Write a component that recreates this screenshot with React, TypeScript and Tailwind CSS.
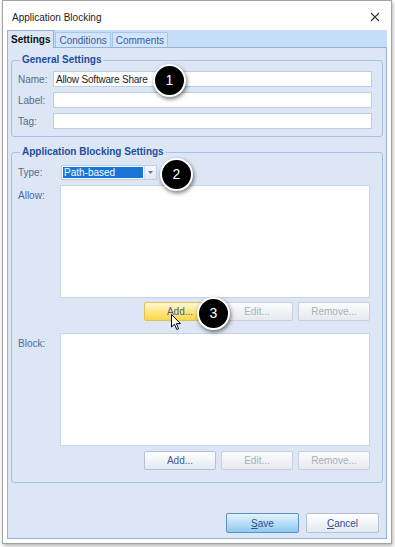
import React from 'react';

const btnBase =
  'h-[19px] w-[72px] rounded-[2px] border flex items-center justify-center text-[10px]';

function Btn({ label, kind }: { label: string; kind: 'normal' | 'disabled' | 'hover' }) {
  const cls =
    kind === 'hover'
      ? 'border-[#e2bf57] bg-gradient-to-b from-[#fff9d6] via-[#ffe680] to-[#ffd54a] text-[#3d5b97]'
      : kind === 'disabled'
      ? 'border-[#c9d0db] bg-gradient-to-b from-[#fbfcfd] to-[#e6e9ee] text-[#a9b0bb]'
      : 'border-[#b3c1d7] bg-gradient-to-b from-[#ffffff] to-[#e2e9f3] text-[#3d5b97]';
  return <div className={`${btnBase} ${cls}`}>{label}</div>;
}

function Badge({ n, x, y }: { n: number; x: number; y: number }) {
  return (
    <div
      className="absolute w-[33px] h-[33px] rounded-full bg-black border-2 border-white shadow-[1px_2px_4px_rgba(0,0,0,0.55)] flex items-center justify-center text-white text-[14px]"
      style={{ left: x - 16, top: y - 16 }}
    >
      {n}
    </div>
  );
}

export default function App() {
  return (
    <div className="relative w-[395px] h-[547px] bg-white font-['Liberation_Sans',Arial,sans-serif] text-[10px] text-[#1e1e1e] overflow-hidden">
      {/* window */}
      <div className="ml-[2px] w-[390px] h-[544px] border border-[#a3a3a3] bg-white shadow-[1px_2px_4px_rgba(0,0,0,0.3)] flex flex-col">
        {/* title bar */}
        <div className="h-[29px] flex items-center justify-between pl-[9px] pr-[11px] text-[10px] text-[#222]">
          <span className="pt-[4px]">Application Blocking</span>
          <svg width="10" height="10" viewBox="0 0 10 10" className="mt-[3px]">
            <path d="M1 1 L9 9 M9 1 L1 9" stroke="#333" strokeWidth="1.1" />
          </svg>
        </div>

        <div className="flex-1 flex flex-col px-[4px] pb-[4px]">
          {/* tab strip */}
          <div className="h-[18px] bg-[#c6ddf8] border-b border-[#8fb2de] flex items-end">
            <div className="h-[18px] -mb-px px-[3px] bg-[#dce6f4] border border-b-0 border-[#8fb2de] flex items-center font-bold text-[#111]">
              Settings
            </div>
            <div className="h-[15px] ml-[1px] px-[3px] bg-[#d3e5fa] border border-b-0 border-[#a9c6ec] flex items-center text-[#3a5c9c]">
              Conditions
            </div>
            <div className="h-[15px] ml-[1px] px-[3px] bg-[#d3e5fa] border border-b-0 border-[#a9c6ec] flex items-center text-[#3a5c9c]">
              Comments
            </div>
          </div>

          {/* panel */}
          <div className="flex-1 flex flex-col bg-[#dce6f4] border border-t-0 border-[#8fb2de] pl-[3px] pr-[3px] pt-[5px]">
            {/* General Settings */}
            <fieldset className="border border-[#a9c1e4] rounded-[3px] pl-[6px] pr-[10px] pb-[7px]">
              <legend className="ml-[2px] px-[2px] leading-[14px] font-bold text-[#1d4f9c]">
                General Settings
              </legend>
              <div className="mt-[4px] grid grid-cols-[35px_1fr] gap-y-[5px] items-center text-[#5b6b86]">
                <span>Name:</span>
                <div className="h-[16px] bg-white border border-[#bccde6] flex items-center pl-[2px] text-[#222] tracking-[-0.2px]">
                  Allow Software Share
                </div>
                <span>Label:</span>
                <div className="h-[16px] bg-white border border-[#bccde6]" />
                <span>Tag:</span>
                <div className="h-[16px] bg-white border border-[#bccde6]" />
              </div>
            </fieldset>

            {/* Application Blocking Settings */}
            <fieldset className="mt-[8px] border border-[#a9c1e4] rounded-[3px] pl-[6px] pr-[12px] pb-[12px]">
              <legend className="ml-[2px] px-[2px] leading-[14px] font-bold text-[#1d4f9c]">
                Application Blocking Settings
              </legend>
              <div className="mt-[6px] grid grid-cols-[42px_1fr] gap-y-[5px]">
                <span className="h-[15px] flex items-center text-[#5b6b86]">Type:</span>
                <div className="ml-px w-[96px] h-[15px] bg-white border border-[#bccde6] flex items-stretch">
                  <div className="flex-1 m-px bg-[#1874d6] text-white flex items-center pl-[1px]">
                    Path-based
                  </div>
                  <div className="w-[12px] bg-gradient-to-b from-[#f6f8fb] to-[#e3e8ef] border-l border-[#d3dbe6] flex items-center justify-center">
                    <svg width="5" height="3" viewBox="0 0 5 3">
                      <path d="M0 0 H5 L2.5 3 Z" fill="#6d7787" />
                    </svg>
                  </div>
                </div>

                <span className="pt-[3px] text-[#4c6aa5]">Allow:</span>
                <div>
                  <div className="h-[113px] bg-white border border-[#c6d4ea]" />
                  <div className="mt-[4px] flex justify-end gap-[5px]">
                    <Btn label="Add..." kind="hover" />
                    <Btn label="Edit..." kind="disabled" />
                    <Btn label="Remove..." kind="disabled" />
                  </div>
                </div>

                <span className="mt-[7px] pt-[3px] text-[#4c6aa5]">Block:</span>
                <div className="mt-[7px]">
                  <div className="h-[113px] bg-white border border-[#c6d4ea]" />
                  <div className="mt-[5px] flex justify-end gap-[5px]">
                    <Btn label="Add..." kind="normal" />
                    <Btn label="Edit..." kind="disabled" />
                    <Btn label="Remove..." kind="disabled" />
                  </div>
                </div>
              </div>
            </fieldset>

            <div className="flex-1" />

            {/* dialog buttons */}
            <div className="flex justify-end gap-[7px] pr-[4px] pb-[5px]">
              <div className="h-[20px] w-[73px] rounded-[2px] border border-[#5c8fc2] bg-gradient-to-b from-[#e4f3fd] via-[#b9def7] to-[#8ccaf0] flex items-center justify-center text-[#2f4f8f]">
                <span>
                  <u>S</u>ave
                </span>
              </div>
              <div className="h-[20px] w-[73px] rounded-[2px] border border-[#b3c1d7] bg-gradient-to-b from-[#ffffff] to-[#e2e9f3] flex items-center justify-center text-[#2f4f8f]">
                <span>
                  <u>C</u>ancel
                </span>
              </div>
            </div>
          </div>
        </div>
      </div>

      {/* callouts */}
      <Badge n={1} x={169} y={80} />
      <Badge n={2} x={176} y={174} />
      <Badge n={3} x={213} y={313} />

      {/* mouse cursor */}
      <svg className="absolute left-[171px] top-[314px]" width="11" height="17" viewBox="0 0 11 17">
        <path
          d="M0.5 0.5 L0.5 13 L3.5 10.2 L5.8 15.5 L7.6 14.7 L5.4 9.6 L9.5 9.6 Z"
          fill="#fff"
          stroke="#000"
          strokeWidth="1"
          strokeLinejoin="round"
        />
      </svg>
    </div>
  );
}
